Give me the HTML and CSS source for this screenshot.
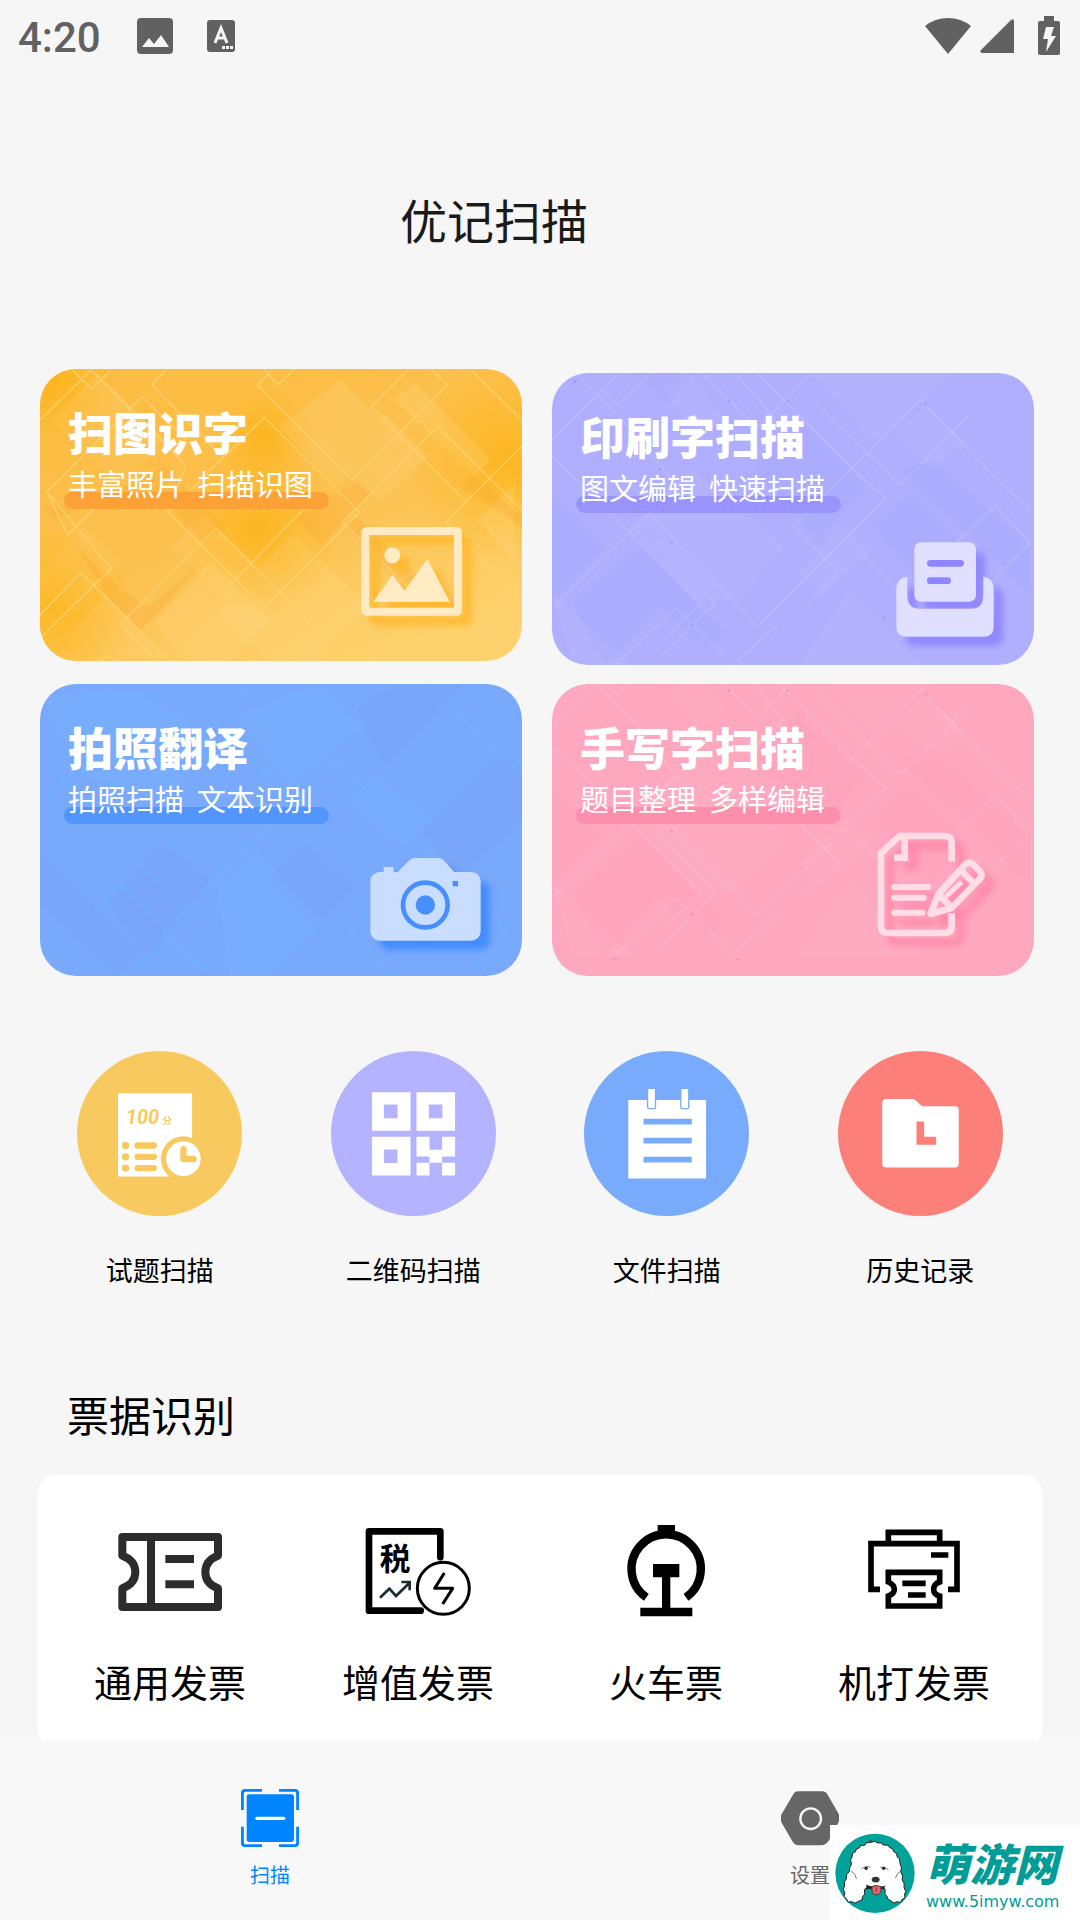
FILE: index.html
```
<!DOCTYPE html>
<html lang="zh-CN">
<head>
	<meta charset="UTF-8">
	<meta name="viewport" content="width=device-width, initial-scale=1">
	<title>优记扫描</title>
	<link rel="stylesheet" href="styles.css">
</head>

<body>
	<!-- 状态栏 -->
	<div class="status">
		<span class="status-time">4:20</span>
		<svg class="status-photo" viewBox="0 0 36 36" width="36" height="36">
			<path fill="#616161" d="M4 0h28a4 4 0 0 1 4 4v28a4 4 0 0 1-4 4H4a4 4 0 0 1-4-4V4a4 4 0 0 1 4-4z"/>
			<path fill="#f6f6f6" d="M5 29l7-9 5 6 7-9 8 12z"/>
		</svg>
		<svg class="status-lang" viewBox="0 0 28 32" width="28" height="32">
			<rect width="28" height="32" rx="3" fill="#616161"/>
			<path fill="none" stroke="#f6f6f6" stroke-width="3" d="M8 23l6-15 6 15M10 18h8"/>
			<path fill="#f6f6f6" d="M15 26h3v3h-3zM19 26h3v3h-3zM23 26h3v3h-3z"/>
		</svg>
		<svg class="status-wifi" viewBox="0 0 48 38" width="48" height="38">
			<path fill="#616161" d="M24 37L1 9Q11 1 24 1T47 9z"/>
		</svg>
		<svg class="status-signal" viewBox="0 0 34 34" width="34" height="34">
			<path fill="#616161" d="M34 2v32H2q-3-1-1-3L31 1q3-2 3 1z"/>
		</svg>
		<svg class="status-battery" viewBox="0 0 22 40" width="22" height="40">
			<path fill="#616161" d="M6 0h10v5h4q2 0 2 2v30q0 2-2 2H2q-2 0-2-2V7q0-2 2-2h4z"/>
			<path fill="#f6f6f6" d="M8 11h8l-3 9h5L8 36l2-13H5z"/>
		</svg>
	</div>

	<main class="main">
		<header class="header">
			<h1 class="header-title">优记扫描</h1>
		</header>

		<!-- 功能卡片 -->
		<div class="cards">
			<div class="cards-col">
				<a href="#" class="card card-yellow">
					<svg class="card-bg" viewBox="27 27 1446 876" preserveAspectRatio="xMaxYMax slice">
						<defs>
							<radialGradient id="glowYellow">
								<stop offset="0" stop-color="#fdb210" stop-opacity=".75"/>
								<stop offset="1" stop-color="#fdb210" stop-opacity="0"/>
							</radialGradient>
							<linearGradient id="fadeLight" x1="0" y1="1" x2="1" y2="0">
								<stop offset="0" stop-color="#fff" stop-opacity="0"/>
								<stop offset="1" stop-color="#ffe49a" stop-opacity=".2"/>
							</linearGradient>
						</defs>
						<g fill="url(#glowYellow)">
							<circle cx="60" cy="60" r="200"/>
							<circle cx="60" cy="740" r="260"/>
							<circle cx="680" cy="510" r="260"/>
							<circle cx="1430" cy="300" r="300"/>
							<circle cx="700" cy="230" r="150"/>
						</g>
						<g fill="url(#fadeLight)">
							<path d="M200 40L400 240L260 380L60 180zM930 60L1080 210L920 380L740 200zM1150 70L1380 300L1330 350L1090 120zM920 300L1060 160L1190 290L1050 430z"/>
							<path d="M420 560L520 460L700 640L600 740zM560 750L790 520L1010 740L850 903H700zM27 640L160 500L270 610L27 860zM1340 480L1450 370V600z"/>
							<path d="M100 830L220 710L400 890H150zM370 790L540 600L720 780L600 903H460z"/>
						</g>
						<g fill="#fba02c" fill-opacity=".22">
							<path d="M27 440L70 480L400 320L580 500L520 550L400 430zM120 540L270 690L350 740L500 620L400 740L330 810L240 720zM800 470L970 370L1020 400L870 560zM980 470L1180 670L1130 700L940 500zM1320 340L1473 470V500L1290 380z"/>
						</g>
						<g fill="none" stroke="#fdd678" stroke-opacity=".8" stroke-width="4">
							<path d="M125 30L182 88L240 30M27 180L180 30L465 315L410 457L700 742L985 457L700 172L410 457"/>
							<path d="M48 395L333 110L465 240M48 395L240 625L27 835M48 395L110 525L240 395M27 765L150 638L415 903"/>
							<path d="M405 30L363 75L570 285M270 792L555 507L840 792M270 792L380 903M580 692L855 410M725 30L680 75L965 360L1250 75L1200 27M740 75L790 27"/>
							<path d="M1130 30L1020 140L1305 425L1473 258M935 487L1220 200L1473 450M935 487L1210 760M1473 720L1245 487L1340 390M1320 30L1473 180M205 903L237 890L260 903M700 27L740 75"/>
						</g>
						<g class="card-icon" fill="#ffebc3">
							<rect x="1003" y="513" width="278" height="242" rx="4" fill="none" stroke="#ffebc3" stroke-width="24"/>
							<circle cx="1084" cy="586" r="24"/>
							<path d="M1027 726L1085 644L1121 692L1189 597L1257 726z"/>
						</g>
					</svg>
					<span class="card-title">扫图识字</span>
					<span class="card-desc">丰富照片&nbsp; 扫描识图</span>
				</a>

				<a href="#" class="card card-blue">
					<svg class="card-bg" viewBox="30 27 1446 876" preserveAspectRatio="xMaxYMax slice">
						<g fill="#7c97f4" fill-opacity=".2">
							<path d="M30 530L330 830L260 903L30 680zM230 680L400 510L540 610L360 860zM980 100L1100 30H1300L1060 270zM1180 470L1420 230L1476 290V440L1280 610zM820 500L970 640L850 760L700 620z"/>
						</g>
						<g fill="#79b6ff" fill-opacity=".25">
							<path d="M30 60L330 50L550 190L400 380L160 300zM620 120L850 30L1000 150L780 330zM560 640L680 530L880 740L720 903H600zM1030 300L1200 430L1120 520L960 380z"/>
						</g>
						<g fill="none" stroke="#6fb3ff" stroke-opacity=".75" stroke-width="6">
							<path d="M190 430L485 715L300 903M50 850L275 628L545 903M350 430L455 545L550 450M665 30L555 140L960 545L1070 655M970 30L555 440M400 770L918 255L1195 535L1476 250M400 770L520 890"/>
							<path d="M1190 30L1476 300M1310 30L1250 85M1195 535L960 770L1090 903M1310 900L1435 770L1370 700M30 390L150 270M30 250L200 410"/>
						</g>
						<g class="card-icon">
							<g fill="#c9ddff">
								<rect x="1021" y="591" width="331" height="206" rx="28"/>
								<path d="M1100 595L1135 559Q1144 549 1157 549H1223Q1235 549 1244 559L1276 595zM1061 576h30v22h-30z"/>
							</g>
							<circle cx="1186" cy="690" r="67" fill="none" stroke="#478fff" stroke-width="14"/>
							<circle cx="1186" cy="690" r="29" fill="#478fff"/>
							<path fill="#478fff" d="M1268 618h16v16h-16z"/>
						</g>
					</svg>
					<span class="card-title">拍照翻译</span>
					<span class="card-desc">拍照扫描&nbsp; 文本识别</span>
				</a>
			</div>

			<div class="cards-col">
				<a href="#" class="card card-purple">
					<svg class="card-bg" viewBox="39 39 1446 876" preserveAspectRatio="xMaxYMax slice">
						<defs>
							<g id="tiles">
								<g fill="#fff" fill-opacity=".04">
									<path d="M370 90L440 20L560 180L480 240zM270 500L460 330L740 560L600 720L470 720zM780 640L900 500L1000 570L850 710zM1070 215L1160 130L1280 250L1180 330zM780 915L930 690L1150 915zM39 700L280 915H100zM820 39H1250L1000 250z"/>
								</g>
								<g class="card-shade">
									<path d="M39 400L200 560L39 720zM100 730L300 560L560 820L500 860L360 740L200 915zM640 320L780 180L980 380L840 540zM1080 330L1473 700V560L1180 300zM1000 500L1120 400L1290 580L1180 700zM280 39H470L390 130z"/>
								</g>
								<g fill="none" stroke="#fff" stroke-opacity=".12" stroke-width="5">
									<path d="M110 39L270 200L410 375L350 440M39 240L190 90L240 39M190 90L235 135L335 39M39 290L185 430L485 730L390 820M45 740L330 460L655 800L1040 415L940 325L655 39M230 915L410 745L560 890M355 900L530 728L350 540"/>
									<path d="M490 39L655 205L820 39M590 39L735 210L640 300M830 130L1085 375L1290 165M765 500L1145 120L1370 355L1473 450M765 500L900 640L800 740M955 570L1150 760M1255 545L1370 435L1473 550M1370 650L1473 550M580 915L720 790"/>
								</g>
							</g>
						</defs>
						<use href="#tiles"/>
						<g fill="#8f8cf4" fill-opacity=".6">
							<circle cx="108" cy="65" r="4"/><circle cx="570" cy="122" r="4"/><circle cx="744" cy="122" r="4"/><circle cx="1160" cy="132" r="4"/><circle cx="363" cy="328" r="4"/><circle cx="398" cy="546" r="4"/><circle cx="460" cy="794" r="4"/><circle cx="1034" cy="774" r="4"/>
						</g>
						<g class="card-icon" fill="#e0dfff">
							<rect x="1126" y="547" width="185" height="178" rx="20"/>
							<path d="M1105 650Q1072 654 1072 686V800Q1072 830 1102 830H1334Q1364 830 1364 800V686Q1364 654 1333 650V708Q1331 746 1298 746H1140Q1107 746 1105 708z"/>
							<path fill="none" stroke="#8f86ff" stroke-width="20" stroke-linecap="round" d="M1174 610H1265M1174 662H1226"/>
						</g>
					</svg>
					<span class="card-title">印刷字扫描</span>
					<span class="card-desc">图文编辑&nbsp; 快速扫描</span>
				</a>

				<a href="#" class="card card-pink">
					<svg class="card-bg" viewBox="39 39 1446 876" preserveAspectRatio="xMaxYMax slice">
						<use href="#tiles" y="-64"/>
						<g fill="#f77f9c" fill-opacity=".6">
							<circle cx="570" cy="59" r="4"/><circle cx="744" cy="59" r="4"/><circle cx="1160" cy="70" r="4"/><circle cx="398" cy="480" r="4"/><circle cx="460" cy="730" r="4"/><circle cx="595" cy="865" r="4"/><circle cx="230" cy="865" r="4"/>
						</g>
						<g class="card-icon" fill="none" stroke="#ffdce6" stroke-width="20">
							<path d="M1238 572V515Q1238 495 1218 495H1082L1026 546V765Q1026 786 1047 786H1218Q1238 786 1238 765V727M1097 495V560H1065"/>
							<path stroke-width="18" stroke-linecap="round" d="M1065 648H1168M1065 680H1155M1065 725H1150"/>
							<path stroke-width="20" stroke-linejoin="round" d="M1175 728L1198 670L1278 581Q1291 569 1304 581L1321 599Q1334 612 1321 625L1238 711zM1268 600L1302 634M1198 670L1238 709"/>
							<path stroke-width="15" d="M1220 677L1268 633"/>
							<path fill="#ffdce6" stroke="none" d="M1168 736L1182 705L1208 724z"/>
						</g>
					</svg>
					<span class="card-title">手写字扫描</span>
					<span class="card-desc">题目整理&nbsp; 多样编辑</span>
				</a>
			</div>
		</div>

		<!-- 快捷入口 -->
		<div class="quick">
			<a href="#" class="quick-item">
				<svg class="quick-icon" viewBox="51 63 496 496">
					<circle cx="299" cy="311" r="248" fill="#f7c95f"/>
					<path fill="#fff" d="M174 190h223v250H174z"/>
					<text class="quick-score" x="198" y="282">100</text>
					<text class="quick-unit" x="308" y="282">分</text>
					<g fill="#f7c95f">
						<circle cx="197" cy="347" r="11"/>
						<circle cx="197" cy="381" r="11"/>
						<circle cx="197" cy="415" r="11"/>
						<circle cx="371" cy="387" r="68"/>
					</g>
					<path fill="none" stroke="#f7c95f" stroke-width="19" stroke-linecap="round" d="M233 347h49M233 381h49M233 415h49"/>
					<circle cx="371" cy="387" r="52" fill="#fff"/>
					<path fill="none" stroke="#f7c95f" stroke-width="19" stroke-linecap="round" stroke-linejoin="round" d="M371 358v30h31"/>
				</svg>
				<span class="quick-text">试题扫描</span>
			</a>
			<a href="#" class="quick-item">
				<svg class="quick-icon" viewBox="807 63 496 496">
					<circle cx="1055" cy="311" r="248" fill="#b4b3ff"/>
					<path fill="#fff" fill-rule="evenodd" d="M930 187h116v116H930zM966 224v41h41v-41zM1064 187h116v116h-116zM1101 224v41h41v-41zM930 321h116v116H930zM966 359v41h41v-41z"/>
					<path fill="#fff" d="M1064 321h39v39h38v-39h39v59h-39v19h39v38h-39v-38h-38v38h-39v-38h39v-19h-39z"/>
				</svg>
				<span class="quick-text">二维码扫描</span>
			</a>
			<a href="#" class="quick-item">
				<svg class="quick-icon" viewBox="77 63 496 496">
					<circle cx="325" cy="311" r="248" fill="#78abfb"/>
					<path fill="#fff" d="M210 210h234v236H210z"/>
					<path fill="#78abfb" d="M256 267h145v17H256zM256 324h145v17H256zM256 381h145v17H256z"/>
					<path fill="#fff" stroke="#78abfb" stroke-width="4" d="M268 175h24v56q0 5-5 5h-14q-5 0-5-5zM368 175h24v56q0 5-5 5h-14q-5 0-5-5z"/>
				</svg>
				<span class="quick-text">文件扫描</span>
			</a>
			<a href="#" class="quick-item">
				<svg class="quick-icon" viewBox="831 63 496 496">
					<circle cx="1079" cy="311" r="248" fill="#fd7f79"/>
					<path fill="#fff" d="M976 207h84l24 22h98q12 0 12 12v160q0 12-12 12H976q-12 0-12-12V219q0-12 12-12z"/>
					<path fill="#fd7f79" d="M1067 275h23v46h36v24h-59z"/>
				</svg>
				<span class="quick-text">历史记录</span>
			</a>
		</div>

		<!-- 票据识别 -->
		<h2 class="section-title">票据识别</h2>
		<div class="bills">
			<a href="#" class="bill">
				<svg class="bill-icon" viewBox="233 460 372 288" fill="none" stroke="#2c2c2c" stroke-width="24">
					<path stroke-linejoin="round" d="M276 502H563V558Q525 572 525 607T563 656V712H276V656Q315 642 315 607T276 558z"/>
					<path d="M362 502V712M405 568h86M405 644h86"/>
				</svg>
				<span class="bill-text">通用发票</span>
			</a>
			<a href="#" class="bill">
				<svg class="bill-icon" viewBox="978 460 372 288" fill="none" stroke="#000">
					<path stroke-width="20" stroke-linecap="round" stroke-linejoin="round" d="M1231 563V485H1017V723H1172"/>
					<text class="bill-tax" x="1049" y="601">税</text>
					<path stroke="#1d2b36" stroke-width="8" d="M1050 684L1078 657L1098 679L1138 640M1114 637H1139V662"/>
					<circle cx="1240" cy="656" r="78" stroke-width="9"/>
					<path stroke-width="9" stroke-linejoin="round" d="M1243 610L1214 656H1268L1238 703"/>
				</svg>
				<span class="bill-text">增值发票</span>
			</a>
			<a href="#" class="bill">
				<svg class="bill-icon" viewBox="191 460 372 288">
					<path fill="none" stroke="#000" stroke-width="25" d="M318 683A104 104 0 1 1 437 683"/>
					<path d="M352 466h52v30h-52zM338 583h79v40h-27v91h66v26H300v-26h65v-91h-27z"/>
				</svg>
				<span class="bill-text">火车票</span>
			</a>
			<a href="#" class="bill">
				<svg class="bill-icon" viewBox="933 460 372 288" fill="none" stroke="#000" stroke-width="17">
					<path d="M1017 659H990V522H1248V659H1221M1042 522V488H1196V522M1170 556h52"/>
					<path d="M1042 608H1196V637Q1178 643 1178 659T1196 679V709H1042V679Q1060 673 1060 659T1042 637zM1084 641h70M1101 676h53"/>
				</svg>
				<span class="bill-text">机打发票</span>
			</a>
		</div>
	</main>

	<!-- 底部导航 -->
	<nav class="tabbar">
		<a href="#" class="tab tab-active">
			<svg class="tab-icon" viewBox="123 87 174 174">
				<path fill="none" stroke="#0085ff" stroke-width="9" d="M186 91H136Q127 91 127 100V150M237 91H284Q293 91 293 100V150M186 257H136Q127 257 127 248V200M237 257H284Q293 257 293 248V200"/>
				<rect x="140" y="103" width="142" height="143" rx="8" fill="#0085ff"/>
				<path stroke="#fff" stroke-width="10" stroke-linecap="round" d="M171 175h80"/>
			</svg>
			<span class="tab-text">扫描</span>
		</a>
		<a href="#" class="tab">
			<svg class="tab-icon" viewBox="61 56 174 174">
				<path fill="#666" d="M112 63H184Q195 63 201 73L233 129Q241 143 233 157L206 208Q197 225 180 225H114Q102 225 95 213L63 157Q57 143 63 131L97 73Q103 63 112 63z"/>
				<circle cx="150" cy="145" r="31" fill="none" stroke="#f8f8f8" stroke-width="7"/>
			</svg>
			<span class="tab-text">设置</span>
		</a>
	</nav>

	<div class="mark">
		<svg class="mark-logo" viewBox="225 185 242 242">
			<circle cx="346" cy="307" r="120" fill="#00a29a"/>
			<path fill="#fff" stroke="#222" stroke-width="3" stroke-linejoin="round" d="M331 208Q334 206 335 213L347 210L352 215L366 215L370 221L386 222L390 229L400 233L402 241L411 247L413 257L420 264L422 278L426 290L424 303L430 315L428 327L434 337L434 350L439 362L435 371L437 382L427 386L424 395L412 393L403 397L394 390L386 386L382 376L376 370L377 357L372 350Q346 360 321 350L314 356L315 370L309 377L306 388L295 392L286 397L276 393L264 394L260 384L252 378L255 366L250 356L254 345L253 333L259 325L260 311L268 302L270 289L275 279L272 266L277 257L278 246L287 242L290 233L299 230L303 223L315 222L319 215L334 213z"/>
			<path fill="#222" d="M320 341Q334 350 348 342Q364 350 378 344L372 355L360 352L346 360L334 352L320 356z"/>
			<path fill="#e9606c" stroke="#222" stroke-width="2" d="M337 347q13-6 27 0v12q-2 13-14 13t-13-13z"/>
			<ellipse cx="348" cy="326" rx="12" ry="9" fill="#333"/>
			<circle cx="319" cy="292" r="5" fill="#222"/>
			<circle cx="372" cy="292" r="5" fill="#222"/>
			<path fill="none" stroke="#333" stroke-width="2" d="M274 300q14 8 16 24M424 300q-14 8-16 22M306 294q12-12 26-5M362 289q14-5 25 8M350 350v14"/>
		</svg>
		<div class="mark-text">
			<span class="mark-name">萌游网</span>
			<span class="mark-url">www.5imyw.com</span>
		</div>
	</div>
</body>
</html>
```
FILE: styles.css
```
* {
	box-sizing: border-box;
}

body {
	display: flex;
	flex-direction: column;
	height: 100vh;
	margin: 0;
	background: #f6f6f6;
	color: #000;
	font-family: "Noto Sans CJK SC", sans-serif;
}

a {
	color: inherit;
	text-decoration: none;
}

/* 状态栏 */
.status {
	display: flex;
	align-items: center;
	flex: none;
	height: 72px;
	padding: 0 20px 0 18px;
}

.status-time {
	padding-top: 3px;
	color: #616161;
	font: 500 42px/50px Roboto, sans-serif;
}

.status-photo {
	margin-left: 36px;
}

.status-lang {
	margin-left: 34px;
}

.status-wifi {
	margin-left: auto;
}

.status-signal {
	margin-left: 8px;
}

.status-battery {
	margin-left: 24px;
}

/* 内容区 */
.main {
	flex: 1;
	min-height: 0;
	overflow: hidden;
}

.header {
	display: flex;
	align-items: center;
	justify-content: center;
	height: 297px;
	padding: 0 92px 4px 0;
}

.header-title {
	margin: 0;
	color: #1a1a1a;
	font-size: 47px;
	font-weight: 400;
	line-height: 60px;
}

/* 功能卡片 */
.cards {
	display: flex;
	gap: 30px;
	padding: 0 46px 0 40px;
}

.cards-col {
	display: flex;
	flex: 1;
	flex-direction: column;
	gap: 19px;
}

.cards-col:first-child {
	gap: 23px;
}

.cards-col:last-child {
	padding-top: 4px;
}

.card {
	position: relative;
	display: flex;
	flex-direction: column;
	align-items: flex-start;
	height: 292px;
	padding: 34px 28px;
	overflow: hidden;
	border-radius: 36px;
	color: #fff;
}

.card-bg {
	position: absolute;
	top: 0;
	left: 0;
	width: 100%;
	height: 100%;
}

.card-icon {
	filter: drop-shadow(28px 28px 10px var(--deep));
}

.card-shade {
	fill: var(--shade);
	fill-opacity: .2;
}

.card-title,
.card-desc {
	position: relative;
	z-index: 1;
}

.card-title {
	font-size: 45px;
	font-weight: 900;
	line-height: 58px;
}

.card-desc {
	font-size: 29px;
	line-height: 44px;
}

/* 副标题下的色条 */
.card-desc::before {
	content: "";
	position: absolute;
	right: -16px;
	bottom: -4px;
	left: -4px;
	z-index: -1;
	height: 17px;
	border-radius: 9px;
	background: var(--bar);
}

.card-yellow {
	--deep: #fdb92f;
	--bar: #fba136;
	background: linear-gradient(160deg, #fcbd45 20%, #fcc353 55%, #fdd26e 90%);
}

.card-purple {
	--deep: #9188ff;
	--bar: #9993fe;
	--shade: #a09ffe;
	background: #b0afff;
}

.card-blue {
	--deep: #448dff;
	--bar: #5295fd;
	background: #78a9fb;
}

.card-pink {
	--deep: #fd87a7;
	--bar: #fd8fac;
	--shade: #fd95b3;
	background: #fea8c0;
}

/* 快捷入口 */
.quick {
	display: flex;
	padding: 75px 33px 0;
}

.quick-item {
	display: flex;
	flex: 1;
	flex-direction: column;
	align-items: center;
	gap: 34px;
}

.quick-icon {
	width: 165px;
	height: 165px;
}

.quick-score {
	fill: #f7c95f;
	font: italic 700 60px Roboto, sans-serif;
}

.quick-unit {
	fill: #f7c95f;
	font-size: 28px;
	font-weight: 700;
}

.quick-text {
	font-size: 27px;
	line-height: 40px;
}

/* 票据识别 */
.section-title {
	margin: 94px 0 31px;
	padding: 0 67px;
	font-size: 42px;
	font-weight: 400;
	line-height: 60px;
}

.bills {
	display: flex;
	margin: 0 37px;
	padding: 48px 5px 37px 9px;
	border-radius: 20px;
	background: #fff;
}

.bill {
	display: flex;
	flex: 1;
	flex-direction: column;
	align-items: center;
	gap: 34px;
}

.bill-icon {
	width: 124px;
	height: 96px;
}

.bill-tax {
	fill: #000;
	stroke: none;
	font-size: 92px;
	font-weight: 700;
}

.bill-text {
	font-size: 38px;
	line-height: 56px;
}

/* 底部导航 */
.tabbar {
	display: flex;
	flex: none;
	height: 180px;
	padding-top: 49px;
	background: #f8f8f8;
}

.tab {
	display: flex;
	flex: 1;
	flex-direction: column;
	align-items: center;
	gap: 14px;
	color: #666;
}

.tab-active {
	color: #0085ff;
}

.tab-icon {
	width: 58px;
	height: 58px;
}

.tab-text {
	font-size: 20px;
	line-height: 28px;
}

/* 右下角站点标识 */
.mark {
	position: fixed;
	right: 0;
	bottom: 0;
	display: flex;
	align-items: center;
	gap: 11px;
	width: 250px;
	height: 95px;
	padding-left: 5px;
	background: #fff;
	color: #009c98;
}

.mark-logo {
	width: 80px;
	height: 80px;
}

.mark-text {
	display: flex;
	flex-direction: column;
}

.mark-name {
	font-size: 44px;
	font-style: italic;
	font-weight: 900;
	line-height: 58px;
}

.mark-url {
	font: 16px/22px "DejaVu Sans", sans-serif;
}
```
